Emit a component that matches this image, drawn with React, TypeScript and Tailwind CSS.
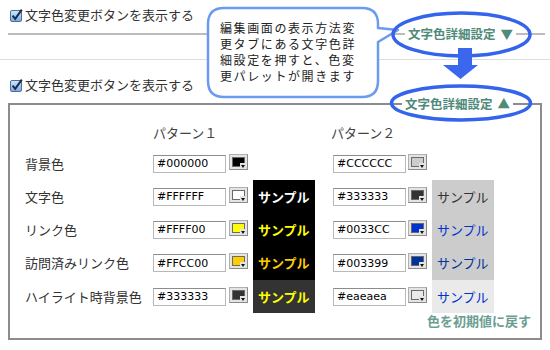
import React from 'react';

type Sample = { bg: string; fg: string };
type Row = {
  label: string;
  v1: string;
  sw1: string;
  v2: string;
  sw2: string;
  s1?: Sample;
  s2?: Sample;
  h: string;
};

const rows: Row[] = [
  { label: '背景色', v1: '#000000', sw1: 'bg-[#000000]', v2: '#CCCCCC', sw2: 'bg-[#cccccc]', h: 'h-[33px]' },
  {
    label: '文字色', v1: '#FFFFFF', sw1: 'bg-[#ffffff]', v2: '#333333', sw2: 'bg-[#333333]', h: 'h-[33px]',
    s1: { bg: 'bg-[#000000]', fg: 'text-[#ffffff]' }, s2: { bg: 'bg-[#cccccc]', fg: 'text-[#333333]' },
  },
  {
    label: 'リンク色', v1: '#FFFF00', sw1: 'bg-[#ffff00]', v2: '#0033CC', sw2: 'bg-[#0033cc]', h: 'h-[33px]',
    s1: { bg: 'bg-[#000000]', fg: 'text-[#ffff00]' }, s2: { bg: 'bg-[#cccccc]', fg: 'text-[#0033cc]' },
  },
  {
    label: '訪問済みリンク色', v1: '#FFCC00', sw1: 'bg-[#ffcc00]', v2: '#003399', sw2: 'bg-[#003399]', h: 'h-[34px]',
    s1: { bg: 'bg-[#000000]', fg: 'text-[#ffcc00]' }, s2: { bg: 'bg-[#cccccc]', fg: 'text-[#003399]' },
  },
  {
    label: 'ハイライト時背景色', v1: '#333333', sw1: 'bg-[#333333]', v2: '#eaeaea', sw2: 'bg-[#eaeaea]', h: 'h-[33px]',
    s1: { bg: 'bg-[#333333]', fg: 'text-[#ffff00]' }, s2: { bg: 'bg-[#eaeaea]', fg: 'text-[#0033cc]' },
  },
];

const Check = () => (
  <svg width="13" height="13" viewBox="0 0 13 13" className="shrink-0">
    <defs>
      <linearGradient id="cbg" x1="0" y1="0" x2="0" y2="1">
        <stop offset="0" stopColor="#d6e7fb" />
        <stop offset="1" stopColor="#78a8e6" />
      </linearGradient>
    </defs>
    <rect x="0.5" y="1.5" width="11" height="11" rx="1.5" fill="url(#cbg)" stroke="#4f6f9b" />
    <path d="M2.6 6.6 L5.2 9.8 L11.8 0.6" fill="none" stroke="#1b2b4a" strokeWidth="2" />
  </svg>
);

const HexInput = ({ value }: { value: string }) => (
  <div className="flex h-[18px] w-[73px] shrink-0 items-center border border-[#b8b8b8] border-t-[#8c8c8c] bg-white pl-[3px] font-['DejaVu_Sans',sans-serif] text-[11px] leading-none text-black">
    {value}
  </div>
);

const Swatch = ({ color }: { color: string }) => (
  <div className="relative mb-[4px] h-[16px] w-[19px] shrink-0 border border-[#8a8a8a] border-t-[#b0b0b0] border-l-[#b0b0b0] bg-[#e4e4e4] p-[2px]">
    <div className={`h-full w-full border border-[#6a6a6a] ${color}`} />
    <div className="absolute bottom-[1px] right-[1px] flex h-[5px] w-[6px] items-end justify-center bg-[#e4e4e4]">
      <svg width="4" height="3" viewBox="0 0 4 3">
        <path d="M0 0 H4 L2 3 Z" fill="#111" />
      </svg>
    </div>
  </div>
);

const SampleCell = ({ s, bold }: { s?: Sample; bold?: boolean }) => (
  <div
    className={`flex h-full w-[62px] shrink-0 items-center pl-[5px] text-[13px] ${s ? s.bg : ''} ${s ? s.fg : ''} ${bold ? 'font-bold' : ''}`}
  >
    {s ? 'サンプル' : ''}
  </div>
);

export default function App() {
  return (
    <div className="relative h-[350px] w-[550px] overflow-hidden bg-white font-['Noto_Sans_CJK_JP',sans-serif] text-[#333]">
      <div className="mt-[7px] flex h-[16px] items-center gap-[2px] pl-[10px] text-[13px] leading-[16px]">
        <Check />
        <span>文字色変更ボタンを表示する</span>
      </div>

      <fieldset className="ml-[8px] mt-[2px] w-[537px] border-0 border-t-2 border-[#bcbcbc]">
        <legend className="ml-[397px] px-[3px] text-[12.5px] font-bold leading-[18px] text-[#4f8a7b]">
          文字色詳細設定<span className="ml-[5px]">▼</span>
        </legend>
      </fieldset>

      <div className="mt-[16px] h-px bg-[#dddddd]" />

      <div className="mt-[17px] flex h-[16px] items-center gap-[2px] pl-[10px] text-[13px] leading-[16px]">
        <Check />
        <span>文字色変更ボタンを表示する</span>
      </div>

      <fieldset className="ml-[8px] mt-[2px] w-[534px] border-2 border-[#8c8c8c] pb-[9px]">
        <legend className="ml-[392px] px-[3px] text-[12.5px] font-bold leading-[18px] text-[#4f8a7b]">
          文字色詳細設定<span className="ml-[5px]">▲</span>
        </legend>

        <div className="flex h-[34px] items-center pt-[6px] text-[13px] leading-[16px] text-[#444]">
          <div className="w-[143px] shrink-0" />
          <div className="w-[178px] shrink-0">パターン１</div>
          <div>パターン２</div>
        </div>

        {rows.map((r) => (
          <div key={r.label} className={`flex items-center ${r.h}`}>
            <div className="w-[143px] shrink-0 pl-[15px] text-[13px] leading-[16px]">{r.label}</div>
            <HexInput value={r.v1} />
            <div className="ml-[3px]">
              <Swatch color={r.sw1} />
            </div>
            <div className="ml-[5px] h-full">
              <SampleCell s={r.s1} bold />
            </div>
            <div className="ml-[18px]">
              <HexInput value={r.v2} />
            </div>
            <div className="ml-[2px]">
              <Swatch color={r.sw2} />
            </div>
            <div className="ml-[5px] h-full">
              <SampleCell s={r.s2} />
            </div>
          </div>
        ))}

        <div className="flex h-[16px] justify-end pr-[9px] text-[13px] font-bold leading-[16px] text-[#6a9e92]">
          色を初期値に戻す
        </div>
      </fieldset>

      <svg className="pointer-events-none absolute left-0 top-0" width="550" height="350" viewBox="0 0 550 350">
        <path
          d="M224 8 H362 Q378 8 378 24 V28 L398 30 L378 42 V81 Q378 97 362 97 H224 Q208 97 208 81 V24 Q208 8 224 8 Z"
          fill="#ffffff"
          stroke="#6a9bf0"
          strokeWidth="2.5"
          strokeLinejoin="round"
        />
        <ellipse cx="461.5" cy="34.5" rx="68.5" ry="21.5" fill="none" stroke="#3463ec" strokeWidth="3.5" />
        <ellipse cx="461" cy="103" rx="69.5" ry="17" fill="none" stroke="#3463ec" strokeWidth="3.5" />
        <path d="M458 48 H472 V65 H478 L460.5 79 L443 65 H458 Z" fill="#3a67ee" />
      </svg>

      <div className="absolute left-[220px] top-[20px] text-[12px] leading-[16px] tracking-[1.6px] text-[#222]">
        <div>編集画面の表示方法変</div>
        <div>更タブにある文字色詳</div>
        <div>細設定を押すと、色変</div>
        <div>更パレットが開きます</div>
      </div>
    </div>
  );
}
